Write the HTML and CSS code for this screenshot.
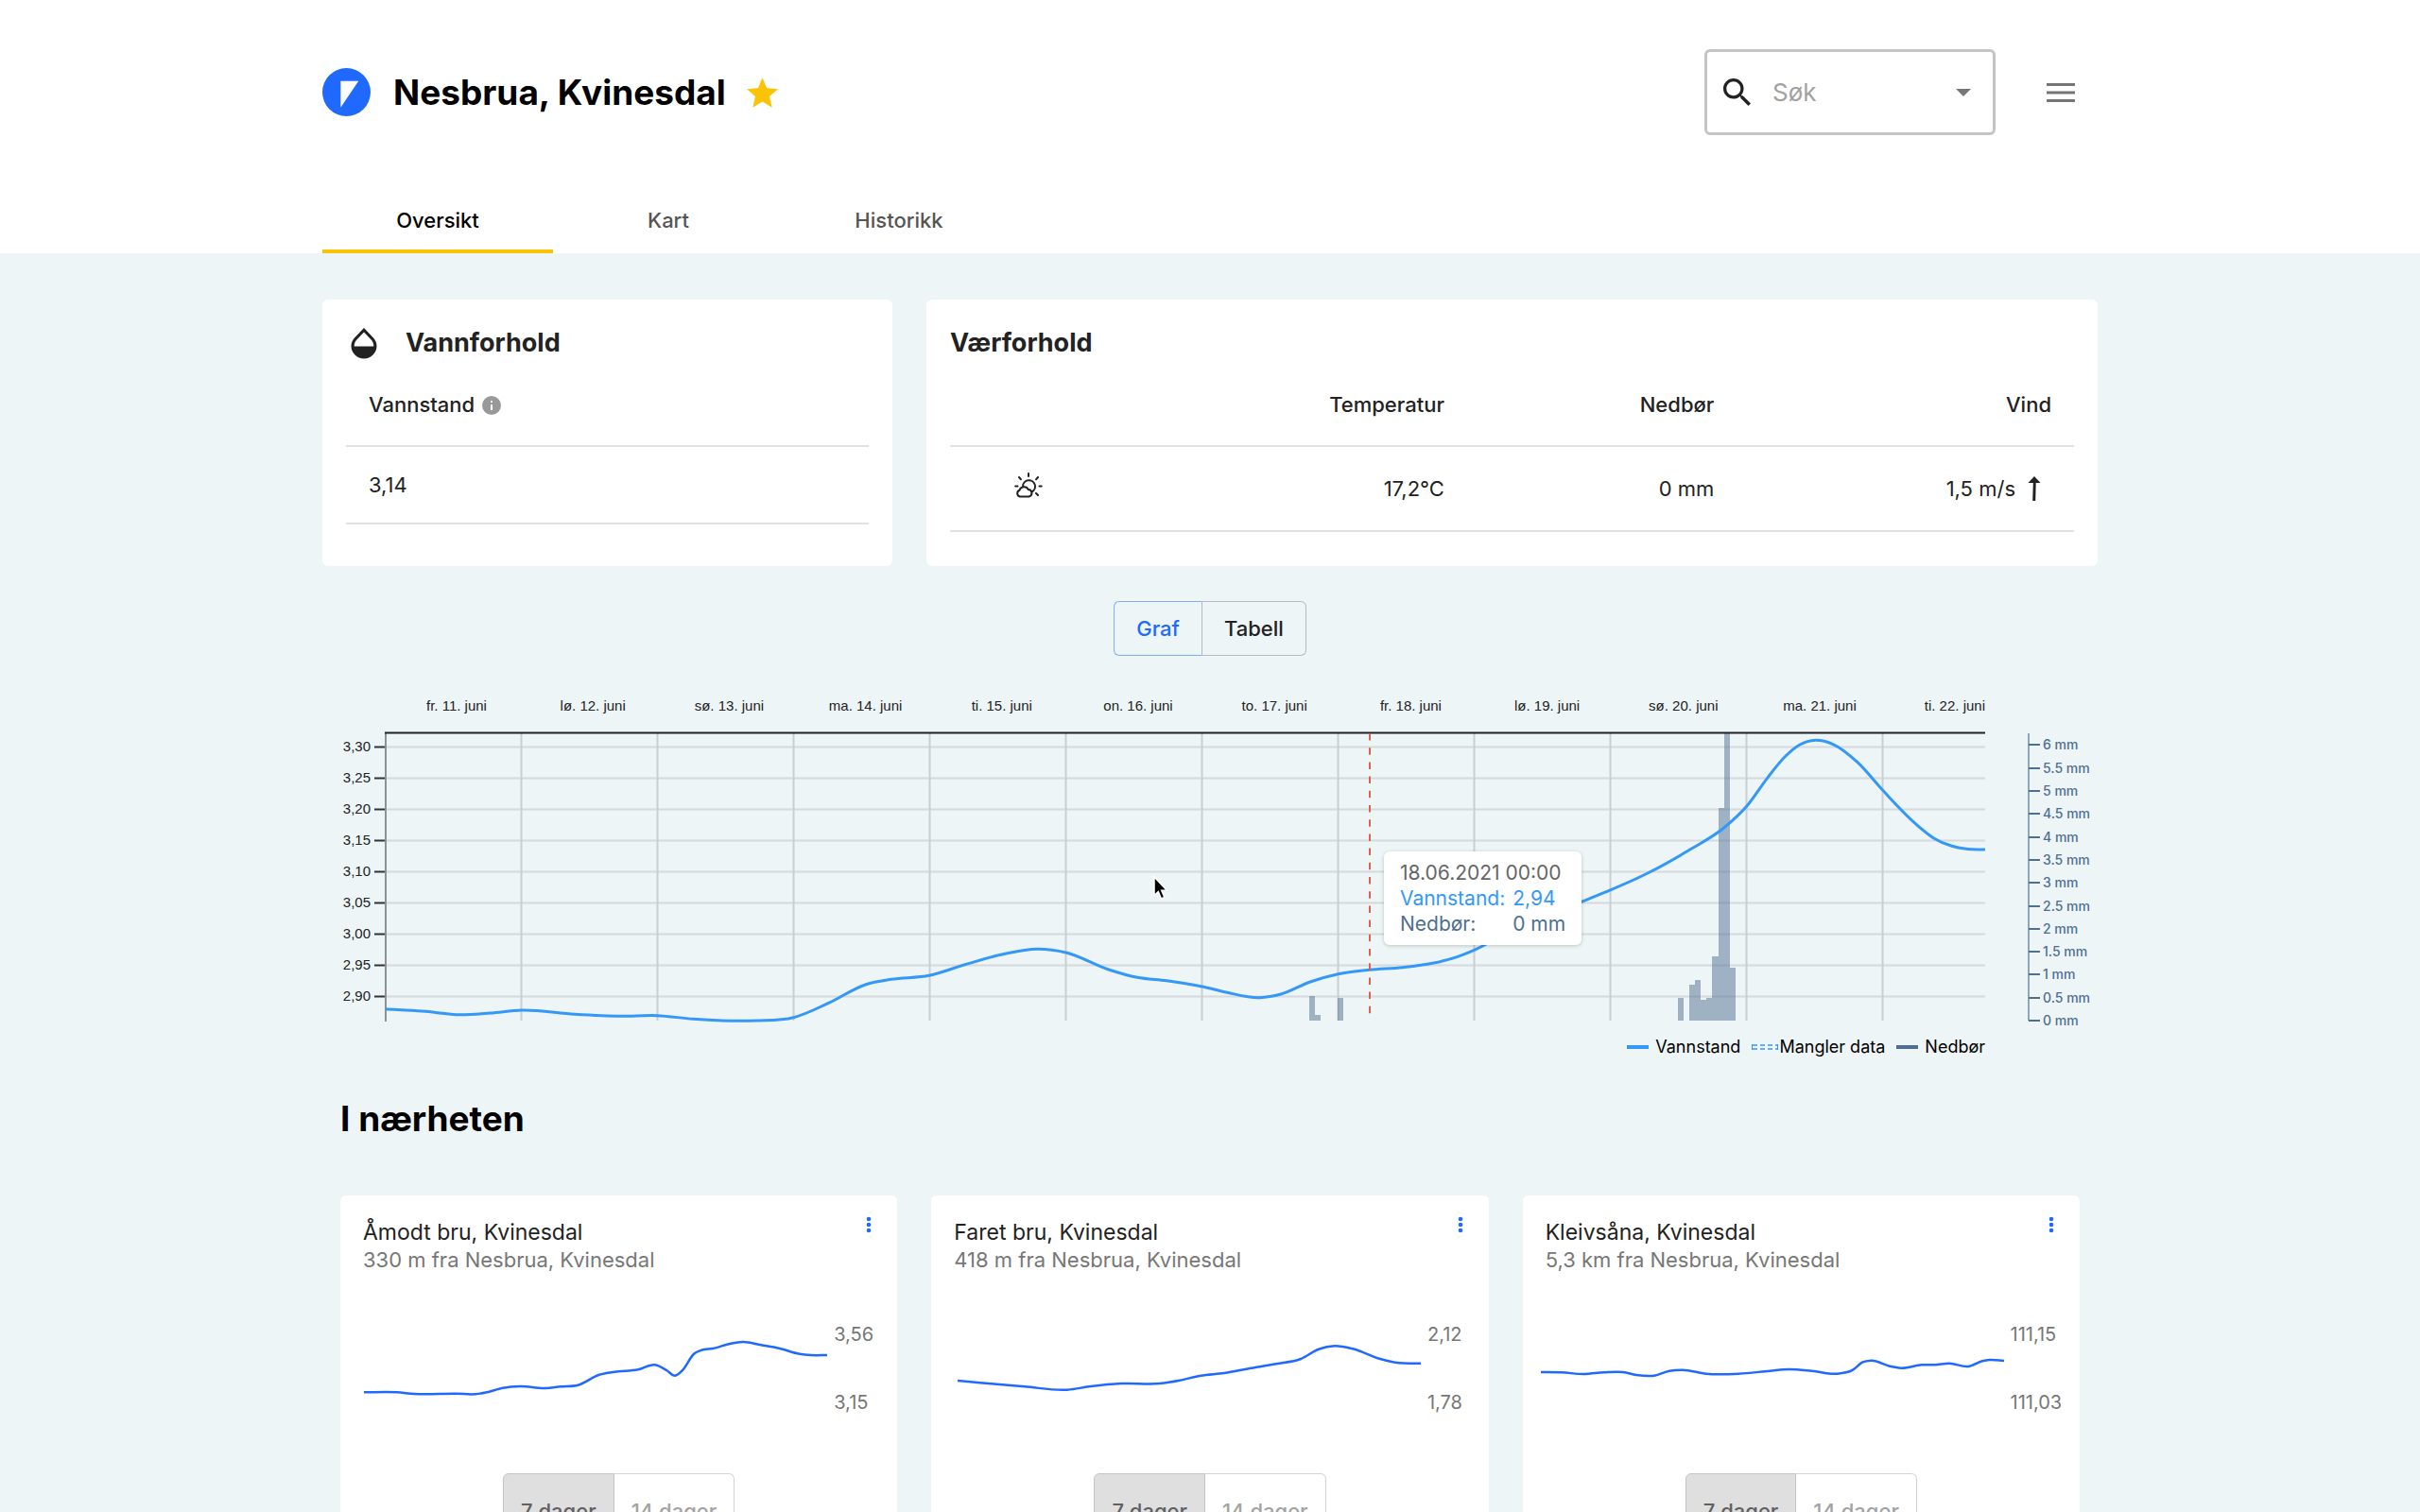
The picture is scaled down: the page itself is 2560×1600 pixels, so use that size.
FILE: index.html
```html
<!DOCTYPE html>
<html lang="no">
<head>
<meta charset="utf-8">
<meta name="viewport" content="width=device-width, initial-scale=1">
<title>Nesbrua, Kvinesdal</title>
<link rel="stylesheet" href="styles.css">
</head>
<body>
<header class="site-header">
  <div class="container">
    <div class="top-row">
      <a class="logo" href="#" aria-label="Forsiden">
        <svg viewBox="0 0 50 50" width="51" height="51"><circle cx="25" cy="25" r="25" fill="#2069ff"/><path d="M19 13.500H37.500L19 41Z" fill="#fff"/></svg>
      </a>
      <h1 class="title">Nesbrua, Kvinesdal</h1>
      <button class="icon-button star" type="button" aria-label="Favoritt">
        <svg viewBox="2 2 20 19" width="33" height="32"><path fill="#f9c406" d="M12 17.270 18.180 21l-1.640-7.030L22 9.240l-7.190-.61L12 2 9.190 8.630 2 9.240l5.460 4.730L5.820 21z"/></svg>
      </button>
      <div class="search">
        <svg viewBox="3 3 17.500 17.500" width="29" height="29" aria-hidden="true"><path fill="#222" d="M15.500 14h-.79l-.28-.27C15.410 12.590 16 11.110 16 9.500 16 5.910 13.090 3 9.500 3S3 5.910 3 9.500 5.910 16 9.500 16c1.610 0 3.090-.59 4.230-1.570l.27.28v.79l5 4.990L20.490 19zm-6 0C7.010 14 5 11.990 5 9.500S7.010 5 9.500 5 14 7.010 14 9.500 11.990 14 9.500 14"/></svg>
        <input class="search-input" type="text" placeholder="Søk" aria-label="Søk">
        <button class="icon-button" type="button" aria-label="Vis forslag">
          <svg viewBox="0 0 16 8" width="16" height="8"><path fill="#777" d="M0 0h16L8 8z"/></svg>
        </button>
      </div>
      <button class="icon-button menu" type="button" aria-label="Meny">
        <svg viewBox="0 0 30 20" width="30" height="20"><path fill="#757575" d="M0 0h30v3H0zM0 8.500h30v3H0zM0 17h30v3H0z"/></svg>
      </button>
    </div>
    <nav class="tabs">
      <a class="tab tab-active" href="#oversikt">Oversikt</a>
      <a class="tab" href="#kart">Kart</a>
      <a class="tab" href="#historikk">Historikk</a>
    </nav>
  </div>
</header>

<main class="container">
  <div class="conditions">
    <section class="panel">
      <div class="panel-head">
        <svg viewBox="0 0 28 34" width="28" height="34" aria-hidden="true"><path fill="#222" fill-rule="evenodd" d="M14 1 23.500 11C26 13.700 27.500 16.500 27.500 20A13.500 13.500 0 0 1 .5 20C.5 16.500 2 13.700 4.500 11ZM14 5.500 6.600 13.300C4.700 15.400 3.700 17.500 3.700 20.500H24.300C24.300 17.500 23.300 15.400 21.400 13.300Z"/></svg>
        <h2 class="panel-title">Vannforhold</h2>
      </div>
      <table class="data">
        <thead><tr><th scope="col"><span class="with-info">Vannstand
          <svg viewBox="0 0 20 20" width="20" height="20" aria-hidden="true"><circle cx="10" cy="10" r="10" fill="#999"/><path fill="#fff" d="M9 5h2v2H9zM9 9h2v6H9z"/></svg></span></th></tr></thead>
        <tbody><tr><td>3,14</td></tr></tbody>
      </table>
    </section>
    <section class="panel">
      <div class="panel-head"><h2 class="panel-title">Værforhold</h2></div>
      <table class="data weather">
        <colgroup><col class="col-symbol"><col class="col-temp"><col class="col-rain"><col class="col-wind"></colgroup>
        <thead><tr><td></td><th scope="col">Temperatur</th><th scope="col">Nedbør</th><th scope="col">Vind</th></tr></thead>
        <tbody><tr>
          <td><svg class="symbol" viewBox="0 0 30 28" width="30" height="28" role="img" aria-label="Lettskyet"><g fill="none" stroke="#222" stroke-width="2" stroke-linecap="round" stroke-linejoin="round"><path d="M15 1v3M5 5l2 2.300M25 5l-2 2.300M1.200 14.500h2.300M26.500 14.500h2.300M23 22l2 2"/><path d="M9 14.500A6.500 6.500 0 1 1 18.500 20.500"/><path d="M6 25.500A3.500 3.500 0 0 1 5.500 18.800 5 5 0 0 1 14.800 18 3.800 3.800 0 0 1 15.500 25.500Z"/></g></svg></td>
          <td>17,2°C</td>
          <td>0 mm</td>
          <td><span class="wind">1,5 m/s
            <svg viewBox="0 0 36 28" width="36" height="28" role="img" aria-label="Sørlig vind"><path fill="#222" d="M18 1 24.500 8H19.700L19.200 27H16.200L16.800 8H11.500Z"/></svg></span></td>
        </tr></tbody>
      </table>
    </section>
  </div>

  <div class="toggle view-toggle">
    <button class="toggle-button toggle-blue" type="button" aria-pressed="true">Graf</button>
    <button class="toggle-button" type="button" aria-pressed="false">Tabell</button>
  </div>

  <section class="chart" aria-label="Vannstand og nedbør">
    <svg class="chart-svg" id="chart" viewBox="341 720 1878 370"></svg>
    <div class="tooltip">
      <span class="tip-date">18.06.2021 00:00</span>
      <span class="tip-level">Vannstand:</span><span class="tip-level">2,94</span>
      <span class="tip-rain">Nedbør:</span><span class="tip-rain">0 mm</span>
    </div>
    <svg class="pointer" viewBox="0 0 18 28" width="18" height="28" aria-hidden="true"><path d="M2 2V21.500L6.300 17.500L9.400 25L12.800 23.500L9.700 16.300H15.500Z" fill="#000" stroke="#fff" stroke-width="1.500"/></svg>
  </section>
  <ul class="legend">
    <li><span class="swatch level"></span>Vannstand</li>
    <li class="missing"><svg viewBox="0 0 28 6" width="28" height="6" aria-hidden="true"><g fill="none" stroke="#3398f8"><path stroke-width="1.500" d="M1 1H28M1 5H28" stroke-dasharray="5 3"/><path d="M.5 0V6M27.500 0V6"/></g></svg>Mangler data</li>
    <li><span class="swatch rain"></span>Nedbør</li>
  </ul>

  <section class="nearby">
    <h2 class="title">I nærheten</h2>
    <div class="cards">
      <article class="card">
        <div class="card-head"><div><h3 class="card-title">Åmodt bru, Kvinesdal</h3><p class="card-sub">330 m fra Nesbrua, Kvinesdal</p></div>
          <button class="icon-button kebab" type="button" aria-label="Valg"><svg viewBox="0 0 6 18" width="6" height="18"><g fill="#2069ff"><circle cx="3" cy="3" r="2.300"/><circle cx="3" cy="9" r="2.300"/><circle cx="3" cy="15" r="2.300"/></g></svg></button></div>
        <div class="trend"><svg class="spark" viewBox="0 0 490 96" data-station="amodt"></svg><div class="range"><span>3,56</span><span>3,15</span></div></div>
        <div class="toggle period"><button class="toggle-button toggle-grey" type="button" aria-pressed="true">7 dager</button><button class="toggle-button toggle-muted" type="button" aria-pressed="false">14 dager</button></div>
      </article>
      <article class="card">
        <div class="card-head"><div><h3 class="card-title">Faret bru, Kvinesdal</h3><p class="card-sub">418 m fra Nesbrua, Kvinesdal</p></div>
          <button class="icon-button kebab" type="button" aria-label="Valg"><svg viewBox="0 0 6 18" width="6" height="18"><g fill="#2069ff"><circle cx="3" cy="3" r="2.300"/><circle cx="3" cy="9" r="2.300"/><circle cx="3" cy="15" r="2.300"/></g></svg></button></div>
        <div class="trend"><svg class="spark" viewBox="0 0 490 96" data-station="faret"></svg><div class="range"><span>2,12</span><span>1,78</span></div></div>
        <div class="toggle period"><button class="toggle-button toggle-grey" type="button" aria-pressed="true">7 dager</button><button class="toggle-button toggle-muted" type="button" aria-pressed="false">14 dager</button></div>
      </article>
      <article class="card">
        <div class="card-head"><div><h3 class="card-title">Kleivsåna, Kvinesdal</h3><p class="card-sub">5,3 km fra Nesbrua, Kvinesdal</p></div>
          <button class="icon-button kebab" type="button" aria-label="Valg"><svg viewBox="0 0 6 18" width="6" height="18"><g fill="#2069ff"><circle cx="3" cy="3" r="2.300"/><circle cx="3" cy="9" r="2.300"/><circle cx="3" cy="15" r="2.300"/></g></svg></button></div>
        <div class="trend"><svg class="spark" viewBox="0 0 490 96" data-station="kleivsana"></svg><div class="range"><span>111,15</span><span>111,03</span></div></div>
        <div class="toggle period"><button class="toggle-button toggle-grey" type="button" aria-pressed="true">7 dager</button><button class="toggle-button toggle-muted" type="button" aria-pressed="false">14 dager</button></div>
      </article>
    </div>
  </section>
</main>
<script src="charts.js"></script>
</body>
</html>
```
FILE: styles.css
```css
* { box-sizing: border-box; }

body {
  margin: 0;
  background: #edf5f7;
  color: #222;
  font-family: Inter, "Liberation Sans", sans-serif;
  font-size: 22px;
  line-height: 29px;
}

h1, h2, h3, p, ul { margin: 0; padding: 0; }
button, input { font: inherit; color: inherit; }
svg { display: block; flex: none; }

.container { max-width: 1878px; margin: 0 auto; }

.icon-button {
  display: flex;
  align-items: center;
  justify-content: center;
  padding: 0;
  border: 0;
  background: none;
  cursor: pointer;
}

/* Header */
.site-header { background: #fff; padding-top: 52px; }
.top-row { display: flex; align-items: center; height: 91px; }
.title { font-size: 37px; line-height: 48px; font-weight: 700; color: #000; }
.logo { margin-right: 24px; }
.star { margin-left: 22px; }

.search {
  display: flex;
  align-items: center;
  width: 308px;
  height: 91px;
  margin-left: auto;
  padding: 0 23px 0 17px;
  border: 3px solid #c4c4c4;
  border-radius: 6px;
}
.search-input {
  flex: 1;
  min-width: 0;
  margin-left: 23px;
  padding: 0;
  border: 0;
  outline: 0;
  background: none;
  font-size: 26px;
}
.search-input::placeholder { color: #a2a2a2; opacity: 1; }
.menu { margin: 0 24px 0 54px; }

.tabs { display: flex; margin-top: 55px; }
.tab {
  width: 244px;
  padding: 21px 0 16px;
  border-bottom: 4px solid transparent;
  color: #555;
  font-weight: 500;
  text-align: center;
  text-decoration: none;
}
.tab-active { border-color: #f9c406; color: #000; }

/* Current conditions */
.conditions {
  display: grid;
  grid-template-columns: 603fr 1239fr;
  gap: 36px;
  margin-top: 49px;
}
.panel { padding: 25px 25px 36px; border-radius: 6px; background: #fff; }
.panel-head { display: flex; align-items: center; gap: 30px; height: 42px; }
.panel-head svg { margin-left: 5px; }
.panel-title { font-size: 27px; line-height: 36px; font-weight: 700; }

.data { width: 100%; border-collapse: collapse; }
.data th, .data td { padding: 0 24px; border-bottom: 2px solid #e2e2e2; text-align: left; }
.data th { padding-top: 2px; font-weight: 500; }
.data thead tr { height: 88px; }
.data tbody tr { height: 82px; }
.with-info, .wind { display: inline-flex; align-items: center; }
.with-info { gap: 8px; }
.wind { gap: 2px; }

.weather { table-layout: fixed; }
.weather th, .weather td { text-align: right; }
.weather tbody tr { height: 90px; }
.col-symbol { width: 14%; }
.col-temp { width: 32%; }
.col-rain { width: 24%; }
.col-wind { width: 30%; }
.symbol { margin: 0 auto 6px; }

/* Toggle groups */
.toggle { display: flex; justify-content: center; }
.toggle-button {
  height: 58px;
  padding: 0 23px;
  border: 1px solid #b3babc;
  border-radius: 0 6px 6px 0;
  background: none;
  font-weight: 500;
}
.toggle-button:first-child { border-radius: 6px 0 0 6px; }
.toggle-button + .toggle-button { border-left: 0; }
.toggle-blue { border-color: #7db0f7; border-right-color: #b3babc; color: #2069ff; }
.view-toggle { margin-top: 37px; }

/* Main chart */
.chart { position: relative; margin-top: 26px; }
.chart-svg { width: 100%; height: auto; }
.chart-svg .helvetica { font-family: "Liberation Sans", sans-serif; font-size: 15px; fill: #222; }
.chart-svg .mm { font-size: 14px; font-weight: 500; fill: #4f6f92; }

.tooltip {
  position: absolute;
  left: 1123px;
  top: 181px;
  display: grid;
  grid-template-columns: auto auto;
  justify-content: start;
  column-gap: 8px;
  padding: 9px 17px;
  border-radius: 6px;
  background: #fff;
  box-shadow: 0 1px 4px rgba(0, 0, 0, .2);
  font-size: 21px;
  line-height: 27px;
  white-space: nowrap;
}
.tip-date { grid-column: 1 / -1; color: #666; }
.tip-level { color: #3398f8; }
.tip-rain { color: #4f6f92; }
.pointer { position: absolute; left: 878px; top: 206px; }

.legend {
  display: flex;
  justify-content: flex-end;
  gap: 12px;
  margin-top: 5px;
  padding-right: 119px;
  list-style: none;
  color: #000;
  font-size: 18px;
  line-height: 26px;
}
.legend li { display: flex; align-items: center; gap: 7px; }
.legend .missing { gap: 1px; }
.swatch { width: 23px; height: 4px; }
.swatch.level { background: #3398f8; }
.swatch.rain { background: #4f6f92; }

/* Nearby stations */
.nearby { margin-top: 39px; padding: 0 19px 60px; }
.cards {
  display: grid;
  grid-template-columns: repeat(3, 1fr);
  gap: 36px;
  margin-top: 57px;
}
.card { padding: 25px 18px 24px 24px; border-radius: 6px; background: #fff; }
.card-head { display: flex; justify-content: space-between; align-items: flex-start; }
.card-title { font-size: 23px; line-height: 29px; font-weight: 400; }
.card-sub { color: #777; }
.kebab { width: 24px; height: 12px; }
.trend {
  display: flex;
  justify-content: center;
  gap: 7px;
  margin: 52px -18px 0 -24px;
}
.spark { flex: 0 1 490px; min-width: 0; height: 96px; }
.range {
  display: flex;
  flex-direction: column;
  justify-content: space-between;
  color: #777;
  font-size: 20px;
  line-height: 24px;
}
.period { margin: 63px -18px 0 -24px; }
.period .toggle-button { height: 80px; padding: 0 18px; border-color: #d2d2d2; }
.period .toggle-grey { background: #dfdfdf; border-color: #c4c4c4; color: #616161; }
.period .toggle-muted { color: #a3a3a3; }
```
FILE: charts.js
```js
const NS = 'http://www.w3.org/2000/svg';

function add(parent, name, attrs, text) {
  const el = document.createElementNS(NS, name);
  for (const key in attrs) el.setAttribute(key, attrs[key]);
  if (text) el.textContent = text;
  parent.appendChild(el);
}

// Smooth curve through a flat list x0, y0, x1, y1, ...
function curve(flat) {
  const p = [];
  for (let i = 0; i < flat.length; i += 2) p.push([flat[i], flat[i + 1]]);
  const secant = i => (p[i + 1][1] - p[i][1]) / (p[i + 1][0] - p[i][0]);
  const slope = i => {
    if (i === 0) return secant(0);
    if (i === p.length - 1) return secant(i - 1);
    const before = p[i][0] - p[i - 1][0], after = p[i + 1][0] - p[i][0];
    return (secant(i - 1) * after + secant(i) * before) / (before + after);
  };
  let d = 'M' + p[0];
  for (let i = 1; i < p.length; i++) {
    const a = p[i - 1], b = p[i], h = (b[0] - a[0]) / 3;
    d += `C${a[0] + h},${a[1] + slope(i - 1) * h} ${b[0] - h},${b[1] - slope(i) * h} ${b[0]},${b[1]}`;
  }
  return d;
}

const LEFT = 408, RIGHT = 2100, TOP = 776, BOTTOM = 1080;
const chart = document.getElementById('chart');

for (let i = 0; i < 9; i++) {
  const y = 790.5 + i * 33;
  add(chart, 'path', { d: `M${LEFT} ${y}H${RIGHT}`, stroke: '#d6dadc', 'stroke-width': 2 });
  add(chart, 'path', { d: `M396 ${y}H${LEFT}`, stroke: '#333', 'stroke-width': 2 });
  add(chart, 'text', { x: 392, y: y + 4, 'text-anchor': 'end', class: 'helvetica' },
    (3.3 - i * 0.05).toFixed(2).replace('.', ','));
}
for (let i = 1; i < 12; i++) {
  add(chart, 'path', { d: `M${LEFT - 0.5 + i * 144} ${TOP}V${BOTTOM}`, stroke: '#cccfd2', 'stroke-width': 2 });
}
add(chart, 'path', { d: `M${LEFT} ${TOP}V${BOTTOM + 1}`, stroke: '#8f9294', 'stroke-width': 2 });

[[1385, 1054], [1391, 1074], [1415, 1056], [1775, 1056], [1787, 1042], [1793, 1037], [1799, 1058],
 [1805, 1056], [1811, 1012], [1818, 855], [1824, 776], [1830, 1024]].forEach(([x, y]) =>
  add(chart, 'rect', { x, y, width: x === 1811 ? 7 : 6, height: BOTTOM - y, fill: '#4f6f92', 'fill-opacity': 0.5 }));

add(chart, 'path', { d: `M${LEFT - 1} ${TOP - 0.5}H${RIGHT}`, stroke: '#222', 'stroke-width': 2 });

['fr. 11.', 'lø. 12.', 'sø. 13.', 'ma. 14.', 'ti. 15.', 'on. 16.', 'to. 17.', 'fr. 18.', 'lø. 19.', 'sø. 20.', 'ma. 21.']
  .forEach((day, i) => add(chart, 'text', { x: 483 + i * 144.2, y: 752, 'text-anchor': 'middle', class: 'helvetica' }, day + ' juni'));
add(chart, 'text', { x: RIGHT, y: 752, 'text-anchor': 'end', class: 'helvetica' }, 'ti. 22. juni');

add(chart, 'path', { d: curve([
  408, 1067.7, 447, 1070, 487, 1073.7, 518.6, 1072, 551.6, 1069, 608, 1073.3, 657, 1075.3, 695, 1074.7,
  733, 1078.3, 800, 1080, 839.5, 1076.7, 876, 1061.7, 916, 1041.7, 942.7, 1036.3, 983, 1032.3, 1020, 1021,
  1060, 1010, 1098, 1004.3, 1127.6, 1008, 1172, 1025.7, 1203, 1034.3, 1234, 1037.7, 1270.5, 1043.7,
  1297, 1050, 1332.5, 1055.7, 1355, 1052, 1386, 1039, 1415.5, 1030.7, 1448.6, 1026.3, 1484, 1023.7,
  1515.5, 1019.3, 1542, 1012.3, 1559, 1005.7, 1578, 996, 1620, 976, 1672, 954.7, 1704, 941.7, 1743, 924,
  1789, 898.3, 1823.7, 876, 1848.5, 852.3, 1869.6, 823.3, 1888.7, 800.3, 1904, 788, 1920.5, 783.3,
  1938.5, 787.3, 1965, 806.7, 1991.7, 836.3, 2022.7, 868.3, 2045.6, 887, 2064.7, 895.3, 2080, 898.3, 2100, 899
]), fill: 'none', stroke: '#3398f8', 'stroke-width': 3 });

add(chart, 'path', { d: `M1449 ${TOP}V1073`, stroke: '#e0604f', 'stroke-width': 2, 'stroke-dasharray': '7.5 7.7' });

add(chart, 'path', { d: `M2146 ${TOP}V${BOTTOM}`, stroke: '#8fa5bd', 'stroke-width': 2 });
for (let i = 0; i <= 12; i++) {
  const y = Math.round(BOTTOM - i * 24.3);
  add(chart, 'path', { d: `M2146 ${y}H2158`, stroke: '#4f6f92', 'stroke-width': 2 });
  add(chart, 'text', { x: 2161, y: y + 5, class: 'mm' }, i / 2 + ' mm');
}

const stations = {
  amodt: [0, 73.3, 35, 73.3, 53, 75, 98, 74.7, 118, 75.3, 129, 73.5, 147, 68.7, 165, 67, 192, 69, 208, 67.3,
    226.5, 65.7, 249, 54.7, 265, 51.7, 290, 49.3, 308, 44.3, 320, 50, 329, 55.7, 337, 50, 349, 32.7, 357, 28.7,
    369, 27, 388, 21.7, 401, 20, 420, 23.3, 439, 26.7, 461, 32.7, 473, 34, 490, 34],
  faret: [0, 61, 71, 67.3, 116, 70.7, 141, 67, 173.5, 64, 214, 64, 235, 60.7, 257, 55.7, 282, 53, 308, 48.3,
    337, 43.3, 363, 38, 382, 27.7, 399, 24.3, 418, 27.3, 447, 38, 467, 42.3, 490, 42.7],
  kleivsana: [0, 52, 22, 52.3, 46, 54, 66.5, 52.3, 87, 52, 101, 55, 120, 55.7, 136, 50.7, 150, 49.7, 175, 53.7,
    209, 53.7, 242, 50.7, 262, 49, 287, 50.7, 313.5, 53.7, 330, 49.7, 340, 41.7, 349.5, 39.7, 369, 45.7,
    381, 47.7, 403, 44.3, 417, 44.3, 432, 42.7, 452, 46, 467, 40.3, 475, 39, 490, 40]
};
document.querySelectorAll('.spark').forEach(svg =>
  add(svg, 'path', { d: curve(stations[svg.dataset.station]), fill: 'none', stroke: '#2069ff', 'stroke-width': 2.5 }));
```
